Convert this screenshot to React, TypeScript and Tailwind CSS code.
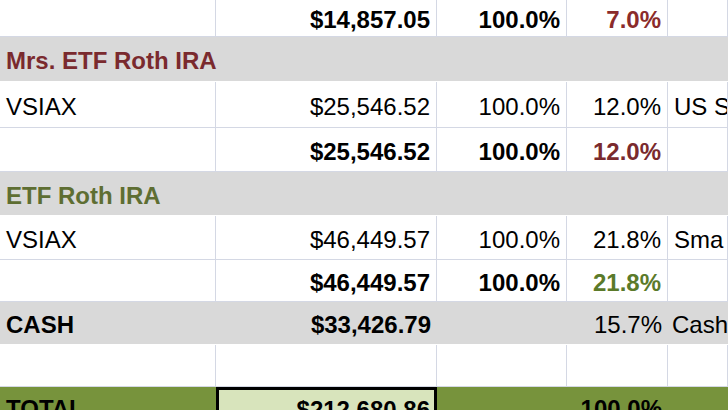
import React from "react";

const cols = "grid-cols-[216px_221px_130px_101px_1fr]";
const cell = "flex items-center pt-1 px-[6px] whitespace-nowrap overflow-hidden border-r border-b border-[#d4d8e4]";

function Row({ h, c, bold, colors = [] }: { h: string; c: string[]; bold?: boolean; colors?: string[] }) {
  return (
    <div className={`grid ${cols} ${h}`}>
      {c.map((t, i) => (
        <div
          key={i}
          className={`${cell} ${i === 0 ? "justify-start" : i === 4 ? "justify-start px-[4px]" : "justify-end"} ${bold ? "font-bold" : ""} ${colors[i] || "text-black"}`}
        >
          {t}
        </div>
      ))}
    </div>
  );
}

function Header({ h, text, color }: { h: string; text: string; color: string }) {
  return (
    <div className={`${h} bg-[#d9d9d9] border-b border-white flex items-center pt-1 px-[6px] font-bold ${color}`}>{text}</div>
  );
}

export default function App() {
  return (
    <div className="w-[728px] h-[410px] overflow-hidden bg-white text-[24px] leading-none" style={{ fontFamily: '"Liberation Sans Narrow", "Liberation Sans", Arial, sans-serif' }}>
      <div>
        <Row h="h-[37px]" bold c={["", "$14,857.05", "100.0%", "7.0%", ""]} colors={["", "", "", "text-[#8b2b2b]"]} />
        <Header h="h-[45px]" text="Mrs. ETF Roth IRA" color="text-[#7a2a2e]" />
        <Row h="h-[46px]" c={["VSIAX", "$25,546.52", "100.0%", "12.0%", "US S"]} />
        <Row h="h-[44px]" bold c={["", "$25,546.52", "100.0%", "12.0%", ""]} colors={["", "", "", "text-[#7a2a2e]"]} />
        <Header h="h-[44px]" text="ETF Roth IRA" color="text-[#5e6e32]" />
        <Row h="h-[44px]" c={["VSIAX", "$46,449.57", "100.0%", "21.8%", "Sma"]} />
        <Row h="h-[42px]" bold c={["", "$46,449.57", "100.0%", "21.8%", ""]} colors={["", "", "", "text-[#5b7a2a]"]} />
        <div className={`grid ${cols} h-[43px] bg-[#d9d9d9] border-b border-white`}>
          <div className="flex items-center pt-1 px-[6px] font-bold">CASH</div>
          <div className="flex items-center justify-end pt-1 px-[6px] font-bold">$33,426.79</div>
          <div></div>
          <div className="flex items-center justify-end pt-1 px-[6px]">15.7%</div>
          <div className="flex items-center pt-1 px-[4px] whitespace-nowrap overflow-hidden">Cash</div>
        </div>
        <Row h="h-[42px]" c={["", "", "", "", ""]} />
        <div className={`grid ${cols} h-[44px] bg-[#77933c]`}>
          <div className="flex items-start pt-[10px] px-[6px] font-bold">TOTAL</div>
          <div className="bg-[#d8e4bc] border-[3px] border-black flex items-start justify-end pt-[8px] px-[4px] font-bold">$212,680.86</div>
          <div></div>
          <div className="flex items-start justify-end pt-[10px] px-[6px] font-bold">100.0%</div>
          <div></div>
        </div>
      </div>
    </div>
  );
}
